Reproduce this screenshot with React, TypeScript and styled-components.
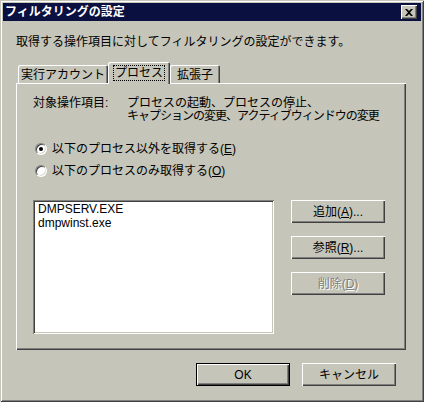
import React from 'react';
import styled, { createGlobalStyle } from 'styled-components';

const bg = '#c5c5b9';

const GlobalStyle = createGlobalStyle`
  html, body {
    margin: 0;
    padding: 0;
    background: ${bg};
  }
  body {
    font-family: "Liberation Sans", "Noto Sans CJK JP", sans-serif;
    font-size: 12px;
    color: #000;
  }
`;

const Window = styled.div`
  width: 424px;
  height: 402px;
  box-sizing: border-box;
  padding: 3px;
  display: flex;
  flex-direction: column;
  background: ${bg};
  box-shadow: inset 1px 1px ${bg}, inset -1px -1px #404040, inset 2px 2px #fff, inset -2px -2px #808080;
`;

const TitleBar = styled.div`
  height: 18px;
  background: #0a1040;
  display: flex;
  align-items: center;
  justify-content: space-between;
  padding-left: 2px;
`;

const Title = styled.span`
  color: #fff;
  font-weight: bold;
  font-size: 12px;
  line-height: 18px;
`;

const CloseButton = styled.div`
  width: 16px;
  height: 14px;
  margin-right: 4px;
  background: ${bg};
  display: flex;
  align-items: center;
  justify-content: center;
  box-shadow: inset 1px 1px #fff, inset -1px -1px #404040, inset -2px -2px #808080;
`;

const Body = styled.div`
  flex: 1;
  padding: 14px 15px 0 13px;
  display: flex;
  flex-direction: column;
`;

const Intro = styled.div`
  line-height: 14px;
  margin-bottom: 13px;
`;

const TabRow = styled.div`
  height: 21px;
  display: flex;
  align-items: flex-end;
  padding-left: 2px;
`;

const Tab = styled.div<{ $active?: boolean; $w: number }>`
  position: relative;
  z-index: ${(p) => (p.$active ? 1 : 0)};
  width: ${(p) => p.$w}px;
  height: ${(p) => (p.$active ? 22 : 18)}px;
  margin-bottom: ${(p) => (p.$active ? -1 : 0)}px;
  box-sizing: border-box;
  background: ${bg};
  border-radius: 2px 2px 0 0;
  box-shadow: inset 1px 1px #fff, inset -1px 0 #404040, inset -2px 0 #808080;
  display: flex;
  align-items: center;
  justify-content: center;
  line-height: 14px;
  padding-top: ${(p) => (p.$active ? 0 : 2)}px;
`;

const Focus = styled.span`
  outline: 1px dotted #000;
  outline-offset: 0;
  padding: 0 1px;
`;

const Panel = styled.div`
  width: 390px;
  height: 267px;
  box-sizing: border-box;
  padding: 14px 0 0 17px;
  box-shadow: inset 1px 1px #fff, inset -1px -1px #404040, inset -2px -2px #808080;
`;

const Description = styled.div`
  display: grid;
  grid-template-columns: 94px auto;
  line-height: 13px;
`;

const Tight = styled.span`
  letter-spacing: -1px;
`;

const RadioGroup = styled.div`
  margin-top: 19px;
  display: flex;
  flex-direction: column;
  gap: 8px;
`;

const RadioRow = styled.div`
  height: 14px;
  display: flex;
  align-items: center;
  gap: 5px;
  padding-left: 2px;
  line-height: 14px;
`;

const RadioCircle = styled.div<{ $checked?: boolean }>`
  width: 12px;
  height: 12px;
  box-sizing: border-box;
  border-radius: 50%;
  background: #fff;
  border: 1px solid;
  border-color: #808080 #fff #fff #808080;
  box-shadow: inset 1px 1px #404040, inset -1px -1px #d8d8d0;
  display: flex;
  align-items: center;
  justify-content: center;

  &::after {
    content: '';
    width: 4px;
    height: 4px;
    border-radius: 50%;
    background: #000;
    display: ${(p) => (p.$checked ? 'block' : 'none')};
  }
`;

const ListRow = styled.div`
  margin-top: 22px;
  display: flex;
  gap: 17px;
`;

const ListBox = styled.div`
  width: 241px;
  height: 134px;
  box-sizing: border-box;
  background: #fff;
  padding: 2px 5px;
  line-height: 14px;
  box-shadow: inset 1px 1px #808080, inset -1px -1px #fff, inset 2px 2px #404040, inset -2px -2px ${bg};
`;

const ButtonColumn = styled.div`
  display: flex;
  flex-direction: column;
  gap: 13px;
`;

const Button = styled.div<{ $default?: boolean; $disabled?: boolean }>`
  width: 94px;
  height: 23px;
  box-sizing: border-box;
  background: ${bg};
  display: flex;
  align-items: center;
  justify-content: center;
  line-height: 14px;
  border: ${(p) => (p.$default ? '1px solid #000' : 'none')};
  color: ${(p) => (p.$disabled ? '#808080' : '#000')};
  text-shadow: ${(p) => (p.$disabled ? '1px 1px #fff' : 'none')};
  box-shadow: inset 1px 1px #fff, inset -1px -1px #404040, inset -2px -2px #808080;
`;

const Footer = styled.div`
  margin-top: 13px;
  margin-right: 10px;
  display: flex;
  justify-content: flex-end;
  gap: 12px;
`;

const U = styled.span`
  text-decoration: underline;
`;

const CloseIcon = () => (
  <svg width="8" height="7" viewBox="0 0 8 7">
    <path d="M0 0h2l2 2 2-2h2L5 3.5 8 7H6L4 5 2 7H0l3-3.5z" fill="#000" />
  </svg>
);

const App = () => (
  <>
    <GlobalStyle />
    <Window>
      <TitleBar>
        <Title>フィルタリングの設定</Title>
        <CloseButton>
          <CloseIcon />
        </CloseButton>
      </TitleBar>
      <Body>
        <Intro>取得する操作項目に対してフィルタリングの設定ができます。</Intro>
        <TabRow>
          <Tab $w={90}>実行アカウント</Tab>
          <Tab $w={62} $active>
            <Focus>プロセス</Focus>
          </Tab>
          <Tab $w={50}>拡張子</Tab>
        </TabRow>
        <Panel>
          <Description>
            <span>対象操作項目:</span>
            <span>
              プロセスの起動、プロセスの停止、
              <br />
              <Tight>キャプションの変更、アクティブウィンドウの変更</Tight>
            </span>
          </Description>
          <RadioGroup>
            <RadioRow>
              <RadioCircle $checked />
              <span>
                以下のプロセス以外を取得する(<U>E</U>)
              </span>
            </RadioRow>
            <RadioRow>
              <RadioCircle />
              <span>
                以下のプロセスのみ取得する(<U>O</U>)
              </span>
            </RadioRow>
          </RadioGroup>
          <ListRow>
            <ListBox>
              <div>DMPSERV.EXE</div>
              <div>dmpwinst.exe</div>
            </ListBox>
            <ButtonColumn>
              <Button>
                追加(<U>A</U>)...
              </Button>
              <Button>
                参照(<U>R</U>)...
              </Button>
              <Button $disabled>
                削除(<U>D</U>)
              </Button>
            </ButtonColumn>
          </ListRow>
        </Panel>
        <Footer>
          <Button $default>OK</Button>
          <Button>キャンセル</Button>
        </Footer>
      </Body>
    </Window>
  </>
);

export default App;
